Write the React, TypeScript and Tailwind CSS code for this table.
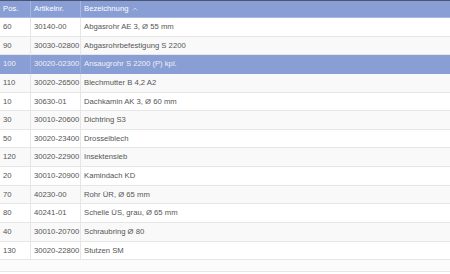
const rows = [
  { pos: "60", nr: "30140-00", name: "Abgasrohr AE 3, Ø 55 mm" },
  { pos: "90", nr: "30030-02800", name: "Abgasrohrbefestigung S 2200" },
  { pos: "100", nr: "30020-02300", name: "Ansaugrohr S 2200 (P) kpl.", selected: true },
  { pos: "110", nr: "30020-26500", name: "Blechmutter B 4,2 A2" },
  { pos: "10", nr: "30630-01", name: "Dachkamin AK 3, Ø 60 mm" },
  { pos: "30", nr: "30010-20600", name: "Dichtring S3" },
  { pos: "50", nr: "30020-23400", name: "Drosselblech" },
  { pos: "120", nr: "30020-22900", name: "Insektensieb" },
  { pos: "20", nr: "30010-20900", name: "Kamindach KD" },
  { pos: "70", nr: "40230-00", name: "Rohr ÜR, Ø 65 mm" },
  { pos: "80", nr: "40241-01", name: "Schelle ÜS, grau, Ø 65 mm" },
  { pos: "40", nr: "30010-20700", name: "Schraubring Ø 80" },
  { pos: "130", nr: "30020-22800", name: "Stutzen SM" },
];

export default function App() {
  return (
    <div className="w-[450px] h-[274px] bg-white overflow-hidden font-['Liberation_Sans',Arial,sans-serif] text-[7.7px]">
      {/* header */}
      <div className="grid grid-cols-[31px_50px_1fr] h-[18px] bg-[#889ed4] border-t border-t-[#4a5674] border-b border-b-[#a9b8e2] text-white">
        <div className="flex items-center pl-[3px] border-r border-[#a7b6e0]">Pos.</div>
        <div className="flex items-center pl-[3px] border-r border-[#a7b6e0]">Artikelnr.</div>
        <div className="flex items-center pl-[3px] gap-[4px]">
          Bezeichnung
          <svg width="6" height="4" viewBox="0 0 6 4" className="text-[#c9d3ee]">
            <path d="M0.8 3.4 L3 1 L5.2 3.4" fill="none" stroke="currentColor" strokeWidth="0.9" />
          </svg>
        </div>
      </div>

      {/* body */}
      {rows.map((r, i) => (
        <div
          key={r.pos}
          className={
            "grid grid-cols-[31px_50px_1fr] h-[18.64px] border-b " +
            (r.selected
              ? "bg-[#889ed4] text-[#eef0f8] border-[#889ed4]"
              : i % 2 === 0
                ? "bg-white text-[#555555] border-[#e6e6e6]"
                : "bg-[#f9f9f9] text-[#555555] border-[#e6e6e6]")
          }
        >
          <div className={"flex items-center pl-[3px] border-r " + (r.selected ? "border-[#9aaddb]" : "border-[#e6e6e6]")}>
            {r.pos}
          </div>
          <div className={"flex items-center pl-[3px] border-r " + (r.selected ? "border-[#9aaddb]" : "border-[#e6e6e6]")}>
            {r.nr}
          </div>
          <div className="flex items-center pl-[3px]">{r.name}</div>
        </div>
      ))}

      {/* empty footer strip */}
      <div className="h-[12px] bg-[#fbfbfb] border-b border-[#e6e6e6]" />
    </div>
  );
}
